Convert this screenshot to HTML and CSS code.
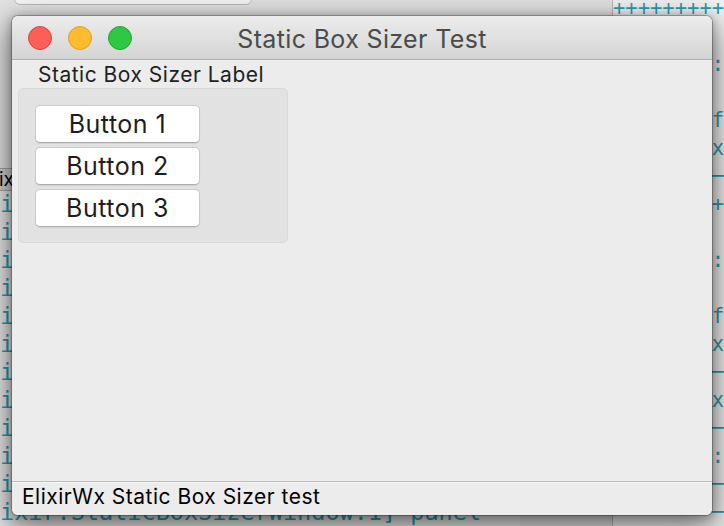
FILE: index.html
```html
<!DOCTYPE html>
<html>
<head>
<meta charset="utf-8">
<title>Static Box Sizer Test</title>
<link rel="stylesheet" href="styles.css">
</head>
<body>
<div class="desktop">
  <div class="bgwin"></div>

  <div class="term term-right">
<pre class="term-text">+++++++++

        :

        f
        x
        ─
        +

        :

        f
        x
        ─
        x
        ─
        :
        ─
        ─</pre>
  </div>

  <div class="term term-left">
    <div class="tabbar"><span class="tabtext">Elixir</span></div>
<pre class="term-text left-text">i
i
i
i
i
i
i
i
i
i
i
ixir:StaticBoxSizerWindow.1] panel</pre>
  </div>

  <div class="window">
    <div class="titlebar">
      <div class="lights">
        <span class="light red"></span>
        <span class="light yellow"></span>
        <span class="light green"></span>
      </div>
      <div class="title">Static Box Sizer Test</div>
      <div></div>
    </div>
    <div class="content">
      <div class="box-label">Static Box Sizer Label</div>
      <div class="staticbox">
        <button class="btn">Button 1</button>
        <button class="btn">Button 2</button>
        <button class="btn">Button 3</button>
      </div>
    </div>
    <div class="statusbar">ElixirWx Static Box Sizer test</div>
  </div>
</div>
</body>
</html>
```
FILE: styles.css
```css
html, body {
  margin: 0;
  padding: 0;
}

body {
  width: 724px;
  height: 526px;
  overflow: hidden;
  font-family: "Inter", "Liberation Sans", sans-serif;
}

.desktop {
  position: relative;
  width: 724px;
  height: 526px;
  overflow: hidden;
  background: #e4e4e4;
}

.bgwin {
  position: absolute;
  left: 14px;
  top: -30px;
  width: 236px;
  height: 33px;
  background: #f7f7f7;
  border: 1px solid #bdbdbd;
  border-radius: 6px;
}

.term {
  position: absolute;
}

.term-text {
  margin: 0;
  font-family: "DejaVu Sans Mono", "Liberation Mono", monospace;
  color: #2a9fb0;
  white-space: pre;
}

.term-right {
  left: 612px;
  top: 0;
  width: 112px;
  height: 526px;
  background: #f3f3f3;
  border-left: 1px solid #b9b9b9;
}

.term-right .term-text {
  font-size: 20.5px;
  line-height: 28px;
  margin-top: -6px;
}

.term-left {
  left: 0;
  top: 168px;
  width: 520px;
  height: 358px;
  background: #ececec;
}

.tabbar {
  height: 21px;
  background: #d6d6d6;
  border-top: 1px solid #a8a8a8;
  border-bottom: 1px solid #a8a8a8;
  font-size: 19px;
  line-height: 21px;
  color: #000;
  overflow: hidden;
  white-space: nowrap;
}

.tabtext {
  display: inline-block;
  margin-left: -17px;
}

.left-text {
  font-size: 23.5px;
  line-height: 28px;
  margin-top: -1px;
}

.window {
  position: absolute;
  left: 12px;
  top: 16px;
  width: 700px;
  height: 499px;
  border-radius: 6px;
  overflow: hidden;
  display: flex;
  flex-direction: column;
  background: #ececec;
  box-shadow:
    0 0 0 1px rgba(0, 0, 0, 0.25),
    0 2px 10px 1px rgba(0, 0, 0, 0.28),
    0 12px 34px 6px rgba(0, 0, 0, 0.45);
}

.titlebar {
  flex: none;
  height: 43px;
  display: grid;
  grid-template-columns: 1fr auto 1fr;
  align-items: center;
  background: linear-gradient(#ececec, #d4d4d4);
  border-bottom: 1px solid #b2b2b2;
}

.lights {
  display: flex;
  gap: 16px;
  padding-left: 16px;
  padding-top: 1px;
}

.light {
  width: 24px;
  height: 24px;
  border-radius: 50%;
  box-sizing: border-box;
}

.red {
  background: #fc5f57;
  border: 1px solid #e0443e;
}

.yellow {
  background: #fdbc2f;
  border: 1px solid #dea123;
}

.green {
  background: #2ec844;
  border: 1px solid #1dab2f;
}

.title {
  font-size: 25px;
  letter-spacing: 0.35px;
  color: #4b4b4b;
  line-height: 28px;
  padding-top: 3px;
  white-space: nowrap;
}

.content {
  flex: 1;
  padding: 3px 0 0 6px;
}

.box-label {
  font-size: 21px;
  letter-spacing: 0.5px;
  line-height: 24px;
  color: #1f1f1f;
  margin-left: 20px;
}

.staticbox {
  margin-top: 1px;
  width: 268px;
  height: 153px;
  background: #e2e2e2;
  border: 1px solid #d9d9d9;
  border-radius: 5px;
  display: flex;
  flex-direction: column;
  gap: 4px;
}

.staticbox .btn:first-child {
  margin-top: 16px;
}

.btn {
  margin-left: 16px;
  width: 165px;
  height: 38px;
  box-sizing: border-box;
  background: #ffffff;
  border: 1px solid #c9c9c9;
  border-bottom-color: #adadad;
  border-radius: 5px;
  box-shadow: 0 1px 1px rgba(0, 0, 0, 0.08);
  font-family: "Inter", "Liberation Sans", sans-serif;
  font-size: 25px;
  letter-spacing: 0.5px;
  line-height: 34px;
  color: #1d1d1d;
  padding: 0;
  text-align: center;
}

.statusbar {
  flex: none;
  height: 34px;
  box-sizing: border-box;
  border-top: 1px solid #bdbdbd;
  box-shadow: inset 0 1px 0 #f7f7f7;
  background: #ececec;
  padding: 3px 0 0 10px;
  font-size: 21px;
  letter-spacing: 0.5px;
  line-height: 24px;
  color: #000;
}
```
